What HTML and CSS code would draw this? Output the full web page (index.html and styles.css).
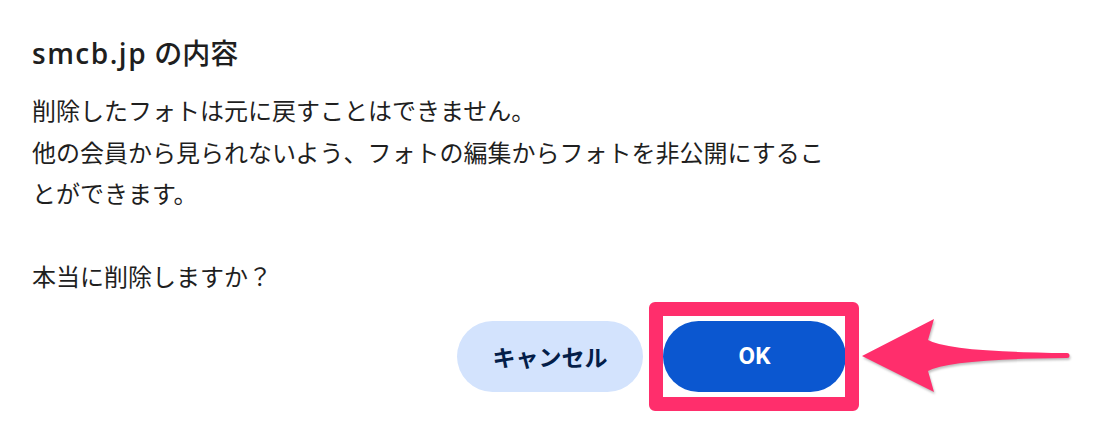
FILE: index.html
```html
<!DOCTYPE html>
<html lang="ja">
<head>
  <meta charset="UTF-8">
  <meta name="viewport" content="width=device-width, initial-scale=1.0">
  <title>smcb.jp の内容</title>
  <link rel="stylesheet" href="styles.css">
</head>
<body>
  <div class="dialog">
    <h1 class="dialog-title"><span class="host">smcb.jp</span> の内容</h1>
    <p class="dialog-message">削除したフォトは元に戻すことはできません。<br>他の会員から見られないよう、フォトの編集からフォトを非公開にすることができます。<br><br>本当に削除しますか？</p>

    <div class="dialog-buttons">
      <button class="btn btn-cancel">キャンセル</button>
      <div class="ok-wrap">
        <button class="btn btn-ok">OK</button>
        <!-- annotation frame -->
        <span class="highlight"></span>
      </div>
    </div>
  </div>

  <!-- annotation arrow -->
  <svg class="arrow" width="220" height="95" viewBox="0 0 220 95">
    <path d="M7 46 L79 9 L73 30 Q94 42 212 43 A2.5 2.5 0 0 1 212 48 Q94 49 73 61 L79 82 Z" fill="#ff2e6c"/>
  </svg>
</body>
</html>
```

FILE: styles.css
```css
html, body {
  min-height: 424px;
}

body {
  margin: 0;
  padding: 0;
  background-color: #fff;
  color: #1f1f1f;
  font-family: "Open Sans", "Noto Sans CJK JP", sans-serif;
}

.dialog {
  width: 814px;
  padding: 35px 0 40px 32px;
}

.dialog-title {
  margin: 0 0 18px 0;
  font-size: 28px;
  line-height: 36px;
  font-weight: 500;
  color: #1f1f1f;
}

.dialog-title .host {
  font-weight: 600;
  letter-spacing: 1.5px;
}

.dialog-message {
  margin: 0;
  font-family: "Noto Sans CJK JP", sans-serif;
  font-size: 24px;
  line-height: 41.5px;
  color: #1f1f1f;
}

.dialog-buttons {
  display: flex;
  justify-content: flex-end;
  align-items: center;
  gap: 20px;
  margin-top: 24px;
}

.btn {
  height: 71px;
  border: none;
  border-radius: 36px;
  font-family: Roboto, "Noto Sans CJK JP", sans-serif;
  font-size: 23px;
  font-weight: 700;
  cursor: pointer;
  padding: 0;
}

.btn-cancel {
  width: 186px;
  background-color: #d3e3fd;
  color: #041e49;
}

.btn-ok {
  width: 183px;
  background-color: #0b57d0;
  color: #fff;
  font-size: 24px;
}

.ok-wrap {
  position: relative;
  display: flex;
}

.highlight {
  position: absolute;
  left: -14px;
  right: -13px;
  top: -19px;
  bottom: -19px;
  border: 14px solid #ff2e6c;
  border-radius: 6px;
  pointer-events: none;
}

.arrow {
  position: absolute;
  left: 855px;
  top: 310px;
  filter: drop-shadow(1px 2px 1px rgba(0, 0, 0, 0.25));
}
```
